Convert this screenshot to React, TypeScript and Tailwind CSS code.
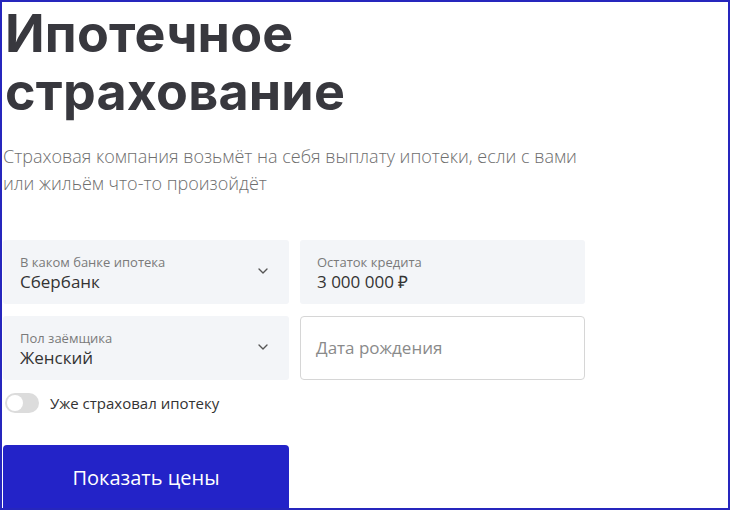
import { ChevronDown } from 'lucide-react'

const fields = [
  { label: 'В каком банке ипотека', value: 'Сбербанк', select: true },
  { label: 'Остаток кредита', value: '3 000 000 ₽', select: false },
  { label: 'Пол заёмщика', value: 'Женский', select: true },
]

function Field({ label, value, select }: { label: string; value: string; select: boolean }) {
  return (
    <div className="h-[64px] bg-[#f3f5f8] rounded-[3px] pl-[17px] pr-[18px] flex items-center">
      <div className="flex-1 pt-[3px]">
        <div className="text-[13px] leading-[16px] text-[#7a7a7a]">{label}</div>
        <div className="text-[17px] leading-[24px] text-[#333]">{value}</div>
      </div>
      {select && <ChevronDown size={16} strokeWidth={2} className="text-[#555] mb-[2px]" />}
    </div>
  )
}

export default function App() {
  return (
    <div className="w-[730px] h-[510px] border-2 border-[#2626bd] bg-white overflow-hidden font-['Open_Sans',sans-serif]">
      <div className="pl-[1px]">
        <h1 className="font-['Inter',sans-serif] font-bold text-[52px] leading-[58px] text-[#38383e] pl-[2px] pt-[3px] tracking-[0.2px]">
          Ипотечное
          <br />
          страхование
        </h1>
        <p className="mt-[22px] text-[18px] leading-[27px] text-[#6e6e6e] font-light max-w-[585px]">
          Страховая компания возьмёт на себя выплату ипотеки, если с вами или жильём что-то произойдёт
        </p>

        <div className="mt-[43px] grid grid-cols-[286px_285px] gap-x-[11px] gap-y-[12px]">
          <Field {...fields[0]} />
          <Field {...fields[1]} />
          <Field {...fields[2]} />
          <div className="h-[64px] rounded-[4px] border border-[#d6d6d6] bg-white pl-[15px] flex items-center text-[17px] text-[#8a8a8a]">
            Дата рождения
          </div>
        </div>

        <div className="mt-[12px] flex items-center gap-[11px]">
          <div className="w-[34px] h-[20px] rounded-full bg-[#dcdcdc] p-[2px] ml-[2px]">
            <div className="w-[16px] h-[16px] rounded-full bg-white" />
          </div>
          <span className="text-[15px] text-[#333]">Уже страховал ипотеку</span>
        </div>

        <button className="mt-[30px] w-[286px] h-[70px] rounded-t-[4px] bg-[#2323c8] text-white text-[20px] pb-[4px] font-['Open_Sans',sans-serif]">
          Показать цены
        </button>
      </div>
    </div>
  )
}
